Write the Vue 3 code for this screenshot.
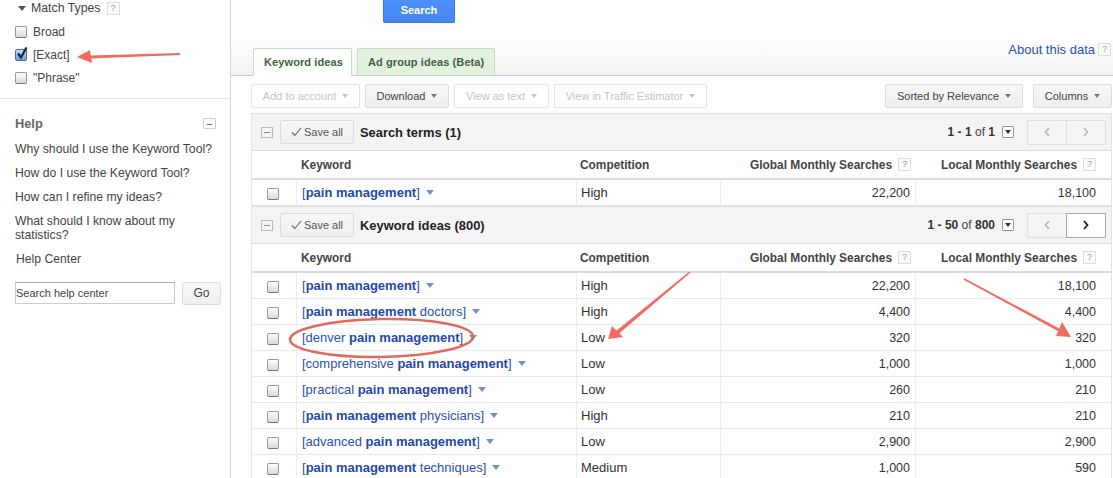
<script setup>
const helpLinks = ['Why should I use the Keyword Tool?', 'How do I use the Keyword Tool?', 'How can I refine my ideas?', 'What should I know about my statistics?']
const matchTypes = [
  { label: 'Broad', checked: false },
  { label: '[Exact]', checked: true },
  { label: '"Phrase"', checked: false }
]
const toolLeft = [
  { label: 'Add to account', off: true, w: 109 },
  { label: 'Download', off: false, w: 84 },
  { label: 'View as text', off: true, w: 95 },
  { label: 'View in Traffic Estimator', off: true, w: 153 }
]
const ideas = [
  { pre: '', b: 'pain management', post: '', c: 'High', g: '22,200', l: '18,100' },
  { pre: '', b: 'pain management', post: ' doctors', c: 'High', g: '4,400', l: '4,400' },
  { pre: 'denver ', b: 'pain management', post: '', c: 'Low', g: '320', l: '320' },
  { pre: 'comprehensive ', b: 'pain management', post: '', c: 'Low', g: '1,000', l: '1,000' },
  { pre: 'practical ', b: 'pain management', post: '', c: 'Low', g: '260', l: '210' },
  { pre: '', b: 'pain management', post: ' physicians', c: 'High', g: '210', l: '210' },
  { pre: 'advanced ', b: 'pain management', post: '', c: 'Low', g: '2,900', l: '2,900' },
  { pre: '', b: 'pain management', post: ' techniques', c: 'Medium', g: '1,000', l: '590' }
]
const sections = [
  { title: 'Search terms (1)', range: '1 - 1', total: '1', nextOn: false, rows: [ideas[0]] },
  { title: 'Keyword ideas (800)', range: '1 - 50', total: '800', nextOn: true, rows: ideas }
]
</script>

<template>
  <div class="page">
    <aside class="side">
      <div class="mt-head"><span class="tri"></span>Match Types<span class="q">?</span></div>
      <label v-for="m in matchTypes" :key="m.label" class="mt-row">
        <span class="cb" :class="{ on: m.checked }">
          <svg v-if="m.checked" viewBox="0 0 14 14" width="14" height="14"><path d="M3 6.5 L6 10.5 L11.5 0.5" fill="none" stroke="#16233f" stroke-width="2.2"/></svg>
        </span>{{ m.label }}
      </label>
      <div class="help">
        <div class="help-head"><span>Help</span><span class="mini"></span></div>
        <a v-for="h in helpLinks" :key="h" class="help-link">{{ h }}</a>
        <a class="help-center">Help Center</a>
        <div class="help-search">
          <div class="input">Search help center</div>
          <div class="go">Go</div>
        </div>
      </div>
    </aside>
    <main class="main">
      <div class="top">
        <div class="search">Search</div>
      </div>
      <div class="tabs">
        <div class="tab active">Keyword ideas</div>
        <div class="tab">Ad group ideas (Beta)</div>
        <div class="about"><a>About this data</a><span class="q">?</span></div>
      </div>
      <div class="toolbar">
        <div v-for="t in toolLeft" :key="t.label" class="btn" :class="{ off: t.off }" :style="{ width: t.w + 'px' }">{{ t.label }}<span class="caret"></span></div>
        <div class="grow"></div>
        <div class="btn sorted">Sorted by Relevance<span class="caret"></span></div>
        <div class="btn columns">Columns<span class="caret"></span></div>
      </div>
      <div class="table">
        <section v-for="s in sections" :key="s.title">
          <div class="sec-head">
            <span class="minus"></span>
            <div class="save"><svg viewBox="0 0 11 10" width="11" height="10"><path d="M1 5.5 L3.8 8.5 L10 1" fill="none" stroke="#666" stroke-width="1.1"/></svg>Save all</div>
            <div class="sec-title">{{ s.title }}</div>
            <div class="pager"><b>{{ s.range }}</b> of <b>{{ s.total }}</b><span class="drop"></span></div>
            <div class="nav">
              <span class="nav-b"><svg viewBox="0 0 6 10" width="6" height="10"><path d="M5 1 L1.5 5 L5 9" fill="none" stroke="#bbb" stroke-width="1.8"/></svg></span>
              <span class="nav-b" :class="{ live: s.nextOn }"><svg viewBox="0 0 6 10" width="6" height="10"><path d="M1 1 L4.5 5 L1 9" fill="none" :stroke="s.nextOn ? '#222' : '#bbb'" stroke-width="1.8"/></svg></span>
            </div>
          </div>
          <div class="grid col-head">
            <div></div>
            <div class="c-kw">Keyword</div>
            <div class="c-comp">Competition</div>
            <div class="c-num global">Global Monthly Searches<span class="q">?</span></div>
            <div class="c-num">Local Monthly Searches<span class="q">?</span></div>
          </div>
          <div v-for="r in s.rows" :key="r.pre + r.post" class="grid row">
            <div class="c-check"><span class="cb"></span></div>
            <div class="c-kw line"><a class="kw">[{{ r.pre }}<b>{{ r.b }}</b>{{ r.post }}]</a><span class="kw-caret"></span></div>
            <div class="c-comp line">{{ r.c }}</div>
            <div class="c-val line">{{ r.g }}</div>
            <div class="c-val last">{{ r.l }}</div>
          </div>
        </section>
      </div>
    </main>
    <svg class="marks" viewBox="0 0 1113 478" width="1113" height="478">
      <ellipse cx="381.5" cy="338" rx="91.5" ry="19" fill="none" stroke="#df6a5e" stroke-width="2.6" transform="rotate(-1 381.5 338)"/>
      <g fill="#f26b60">
        <path d="M180 53 L180 55 L90 58.5 L90 55.5 Z"/>
        <path d="M77 57 L90 50 L92 63 Z"/>
        <path d="M690.6 272.6 L689.4 271.4 L616 331 L618.5 334 Z"/>
        <path d="M608 339 L612 326 L623 337 Z"/>
        <path d="M964.4 278.3 L963.6 279.7 L1058.3 331.3 L1059.7 328.7 Z"/>
        <path d="M1071 337 L1056 336 L1062 322 Z"/>
      </g>
    </svg>
  </div>
</template>

<style>
html, body { margin: 0; background: #fff; }
</style>

<style scoped>
.page {
  position: relative;
  display: flex;
  width: 1113px;
  height: 478px;
  overflow: hidden;
  background: #fff;
  font-family: "Liberation Sans", Arial, sans-serif;
  font-size: 12px;
  color: #333;
}
.side {
  width: 230px;
  flex: none;
  border-right: 1px solid #d5d5d5;
}
.mt-head {
  display: flex;
  align-items: center;
  height: 16px;
  padding-left: 18px;
  font-size: 12.3px;
  color: #444;
}
.tri {
  width: 0;
  height: 0;
  border: 4.5px solid transparent;
  border-top: 5px solid #555;
  border-bottom: 0;
  margin-right: 5px;
}
.q {
  display: inline-block;
  flex: none;
  width: 11px;
  height: 11px;
  line-height: 11px;
  margin-left: 6px;
  border: 1px solid #ddd;
  color: #999;
  font-size: 9px;
  font-weight: 400;
  text-align: center;
  background: #fbfbfb;
}
.mt-row {
  display: flex;
  align-items: center;
  height: 23px;
  padding-left: 15px;
  color: #444;
}
.mt-head + .mt-row { margin-top: 4px; }
.cb {
  position: relative;
  display: inline-block;
  width: 10px;
  height: 10px;
  border: 1px solid #999;
  border-bottom-color: #777;
  border-radius: 2px;
  background: linear-gradient(#fdfdfd, #d9d9d9);
}
.mt-row .cb { margin-right: 6px; }
.cb.on {
  background: linear-gradient(#c9ddf5, #6f9fd8);
  border-color: #566c8c;
}
.cb svg {
  position: absolute;
  left: -1px;
  top: -3px;
}
.help {
  border-top: 1px solid #e3e3e3;
  margin-top: 9px;
  padding: 16px 10px 0 15px;
  color: #444;
}
.help-head {
  display: flex;
  justify-content: space-between;
  align-items: center;
  font-weight: 700;
  font-size: 12.8px;
  color: #666;
  height: 16px;
  padding-right: 4px;
  margin-bottom: 11px;
}
.mini {
  position: relative;
  width: 11px;
  height: 9px;
  border: 1px solid #ccc;
  border-radius: 1px;
}
.mini::after {
  content: "";
  position: absolute;
  left: 3px;
  right: 3px;
  top: 5px;
  height: 1.5px;
  background: #666;
}
.help-link {
  display: block;
  font-size: 12.2px;
  line-height: 14px;
  margin-bottom: 10px;
  color: #444;
}
.help-center {
  display: block;
  font-size: 12.2px;
  line-height: 14px;
  padding-left: 1px;
  color: #444;
}
.help-search {
  display: flex;
  justify-content: space-between;
  margin-top: 16px;
  margin-right: -1px;
}
.input {
  width: 158px;
  height: 20px;
  line-height: 21px;
  border: 1px solid #ccc;
  border-top-color: #aaa;
  font-size: 11px;
}
.go {
  width: 37px;
  height: 21px;
  line-height: 21px;
  border: 1px solid #ddd;
  border-radius: 2px;
  background: linear-gradient(#f8f8f8, #efefef);
  text-align: center;
  color: #444;
}
.main {
  flex: 1;
  min-width: 0;
  position: relative;
}
.top {
  height: 36px;
  padding-left: 152px;
}
.search {
  width: 70px;
  height: 22px;
  line-height: 21px;
  border: 1px solid #3079ed;
  border-top: 0;
  border-radius: 0 0 2px 2px;
  background: linear-gradient(#4d90fe, #4787ed);
  color: #fff;
  text-align: center;
  font-weight: 700;
  font-size: 11px;
}
.tabs {
  display: flex;
  align-items: flex-end;
  height: 39px;
  padding-left: 22px;
  border-bottom: 1px solid #b9d5b9;
  background: linear-gradient(#fff, #f3f3f3);
}
.tab {
  height: 26px;
  line-height: 26px;
  padding: 0 10px;
  margin-right: 5px;
  margin-bottom: -1px;
  border: 1px solid #c3dcc3;
  border-bottom: 1px solid #b9d5b9;
  border-radius: 2px 2px 0 0;
  background: #e4f1e1;
  color: #40633f;
  font-weight: 700;
  font-size: 11px;
  letter-spacing: .1px;
}
.tab.active {
  padding-right: 8px;
  background: #fff;
  border-bottom-color: #fff;
}
.about {
  position: absolute;
  right: 2px;
  top: 42px;
  display: flex;
  align-items: center;
  font-size: 13px;
  color: #2a50b0;
}
.about .q { margin-left: 3px; }
.toolbar {
  display: flex;
  gap: 5px;
  margin: 8px 1px 5px 20px;
}
.grow { flex: 1; }
.btn {
  display: flex;
  align-items: center;
  justify-content: center;
  border: 1px solid #ddd;
  border-radius: 2px;
  background: linear-gradient(#f8f8f8, #efefef);
  box-sizing: border-box;
  height: 24px;
  font-size: 11px;
  color: #444;
}
.btn.off {
  background: #fff;
  border-color: #e3e3e3;
  color: #c4c4c4;
}
.btn.sorted { width: 138px; margin-right: 5px; }
.btn.columns { width: 79px; }
.caret {
  width: 0;
  height: 0;
  margin-left: 6px;
  border: 3.5px solid transparent;
  border-top: 4px solid #777;
  border-bottom: 0;
}
.off .caret { border-top-color: #c4c4c4; }
.table {
  margin: 0 1px 0 20px;
  border-left: 1px solid #e3e3e3;
  border-right: 1px solid #e3e3e3;
  border-top: 1px solid #e3e3e3;
}
.sec-head {
  display: flex;
  align-items: center;
  height: 36px;
  background: #f4f4f4;
  border-bottom: 1px solid #dcdcdc;
}
section + section .sec-head {
  border-top: 2px solid #e0e0e0;
  margin-top: -1px;
}
.minus {
  position: relative;
  width: 10px;
  height: 9px;
  margin: 0 7px 0 9px;
  border: 1px solid #bbb;
}
.minus::after {
  content: "";
  position: absolute;
  left: 2px;
  right: 2px;
  top: 4px;
  height: 1px;
  background: #888;
}
.save {
  display: flex;
  align-items: center;
  justify-content: center;
  gap: 2px;
  width: 72px;
  height: 22px;
  border: 1px solid #dcdcdc;
  border-radius: 2px;
  background: linear-gradient(#f8f8f8, #efefef);
  font-size: 11px;
  color: #555;
}
.sec-title {
  margin-left: 6px;
  font-weight: 700;
  font-size: 12.9px;
  color: #222;
  flex: 1;
}
.pager {
  font-size: 12px;
  color: #444;
  display: flex;
  align-items: center;
  white-space: pre;
}
.pager b { color: #333; }
.drop {
  position: relative;
  width: 10px;
  height: 10px;
  margin-left: 7px;
  border: 1px solid #999;
  border-radius: 1px;
  background: #fff;
}
.drop::after {
  content: "";
  position: absolute;
  left: 1.5px;
  top: 3px;
  border: 3.5px solid transparent;
  border-top: 4px solid #333;
  border-bottom: 0;
}
.nav {
  display: flex;
  margin: 0 5px 0 13px;
}
.nav-b {
  display: flex;
  align-items: center;
  justify-content: center;
  width: 38px;
  height: 23px;
  border: 1px solid #e0e0e0;
  background: #f5f5f5;
}
.nav-b + .nav-b { margin-left: -1px; }
.nav-b.live {
  background: #fff;
  border-color: #aaa;
  position: relative;
}
.grid {
  display: grid;
  grid-template-columns: 44px 280px 144px 195px 1fr;
  align-items: center;
}
.col-head {
  height: 27px;
  font-weight: 700;
  font-size: 11.9px;
  color: #444;
  border-bottom: 2px solid #dcdcdc;
}
.c-kw { padding-left: 5px; }
.c-comp { padding-left: 4px; }
.c-num {
  display: flex;
  align-items: center;
  justify-content: flex-end;
  padding-right: 15px;
}
.c-num.global { padding-right: 4px; }
.row {
  height: 25px;
  border-bottom: 1px solid #e8e8e8;
  font-size: 12.5px;
  color: #333;
}
.line {
  height: 100%;
  display: flex;
  align-items: center;
  border-left: 1px solid #eee;
  box-sizing: border-box;
}
.c-check {
  display: flex;
  justify-content: center;
  padding: 2px 2px 0 0;
}
.c-kw.line, .c-comp.line { font-size: 13px; }
.kw { color: #2a50b0; }
.kw b { font-weight: 700; color: #1f48a8; }
.kw-caret {
  width: 0;
  height: 0;
  margin-left: 6px;
  border: 4px solid transparent;
  border-top: 5px solid #6a94c8;
  border-bottom: 0;
}
.c-val {
  justify-content: flex-end;
  padding-right: 5px;
}
.c-val.last {
  padding-right: 15px;
  border-left: 1px solid #eee;
  height: 100%;
  display: flex;
  align-items: center;
  box-sizing: border-box;
}
.marks {
  position: absolute;
  left: 0;
  top: 0;
  pointer-events: none;
}
</style>
